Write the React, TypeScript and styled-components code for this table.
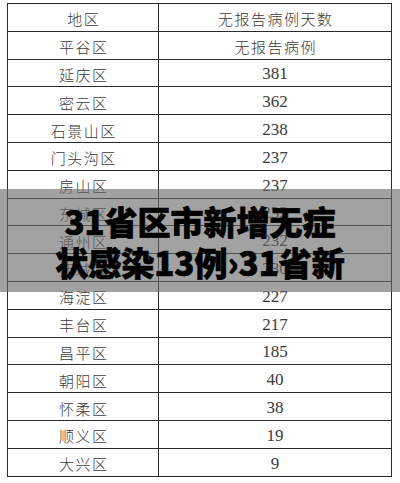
import { Fragment } from "react";
import styled, { createGlobalStyle } from "styled-components";

const GlobalStyle = createGlobalStyle`
    html, body {
        margin: 0;
        padding: 0;
        background: #ffffff;
    }
`;

const Page = styled.div`
    position: relative;
    width: 400px;
    height: 483px;
    overflow: hidden;
    background: #fdfdfd;
    padding: 3px 0 0 7px;
    box-sizing: border-box;
`;

const Grid = styled.div`
    display: grid;
    grid-template-columns: 151px 233px;
    grid-template-rows: repeat(17, 27.8px);
    border-top: 1px solid #2a2a2a;
    border-left: 1px solid #2a2a2a;
    width: 385px;
    box-sizing: border-box;
    background: #ffffff;
`;

const Cell = styled.div<{ num?: boolean }>`
    display: flex;
    align-items: center;
    justify-content: center;
    box-sizing: border-box;
    border-right: 1px solid #2a2a2a;
    border-bottom: 1px solid #2a2a2a;
    padding-top: 3px;
    padding-left: ${(p) => (p.num ? "0" : "1.5px")};
    color: #3a3a3a;
    font-family: ${(p) =>
        p.num
            ? '"Liberation Serif", "Noto Sans CJK SC", serif'
            : '"Noto Sans CJK SC", sans-serif'};
    font-size: ${(p) => (p.num ? "17px" : "15px")};
    font-weight: ${(p) => (p.num ? 400 : 300)};
    letter-spacing: ${(p) => (p.num ? "0" : "1.5px")};
`;

const Banner = styled.div`
    position: absolute;
    left: 0;
    right: 0;
    top: 189px;
    height: 103px;
    display: flex;
    flex-direction: column;
    align-items: center;
    justify-content: center;
    background: rgba(105, 105, 105, 0.62);
    padding-top: 3px;
    box-sizing: border-box;
`;

const Title = styled.div`
    color: #000000;
    font-family: "Noto Sans CJK SC", sans-serif;
    font-weight: 900;
    font-size: 33px;
    line-height: 41px;
    text-align: center;
    white-space: nowrap;
    -webkit-text-stroke: 0.7px #000000;
`;

const rows: [string, string][] = [
    ["地区", "无报告病例天数"],
    ["平谷区", "无报告病例"],
    ["延庆区", "381"],
    ["密云区", "362"],
    ["石景山区", "238"],
    ["门头沟区", "237"],
    ["房山区", "237"],
    ["东城区", "232"],
    ["通州区", "232"],
    ["西城区", "230"],
    ["海淀区", "227"],
    ["丰台区", "217"],
    ["昌平区", "185"],
    ["朝阳区", "40"],
    ["怀柔区", "38"],
    ["顺义区", "19"],
    ["大兴区", "9"],
];

function App() {
    return (
        <>
            <GlobalStyle />
            <Page>
                <Grid>
                    {rows.map(([area, days]) => (
                        <Fragment key={area}>
                            <Cell>{area}</Cell>
                            <Cell num={/^\d+$/.test(days)}>{days}</Cell>
                        </Fragment>
                    ))}
                </Grid>
                <Banner>
                    <Title>31省区市新增无症</Title>
                    <Title>状感染13例›31省新</Title>
                </Banner>
            </Page>
        </>
    );
}

export default App;
